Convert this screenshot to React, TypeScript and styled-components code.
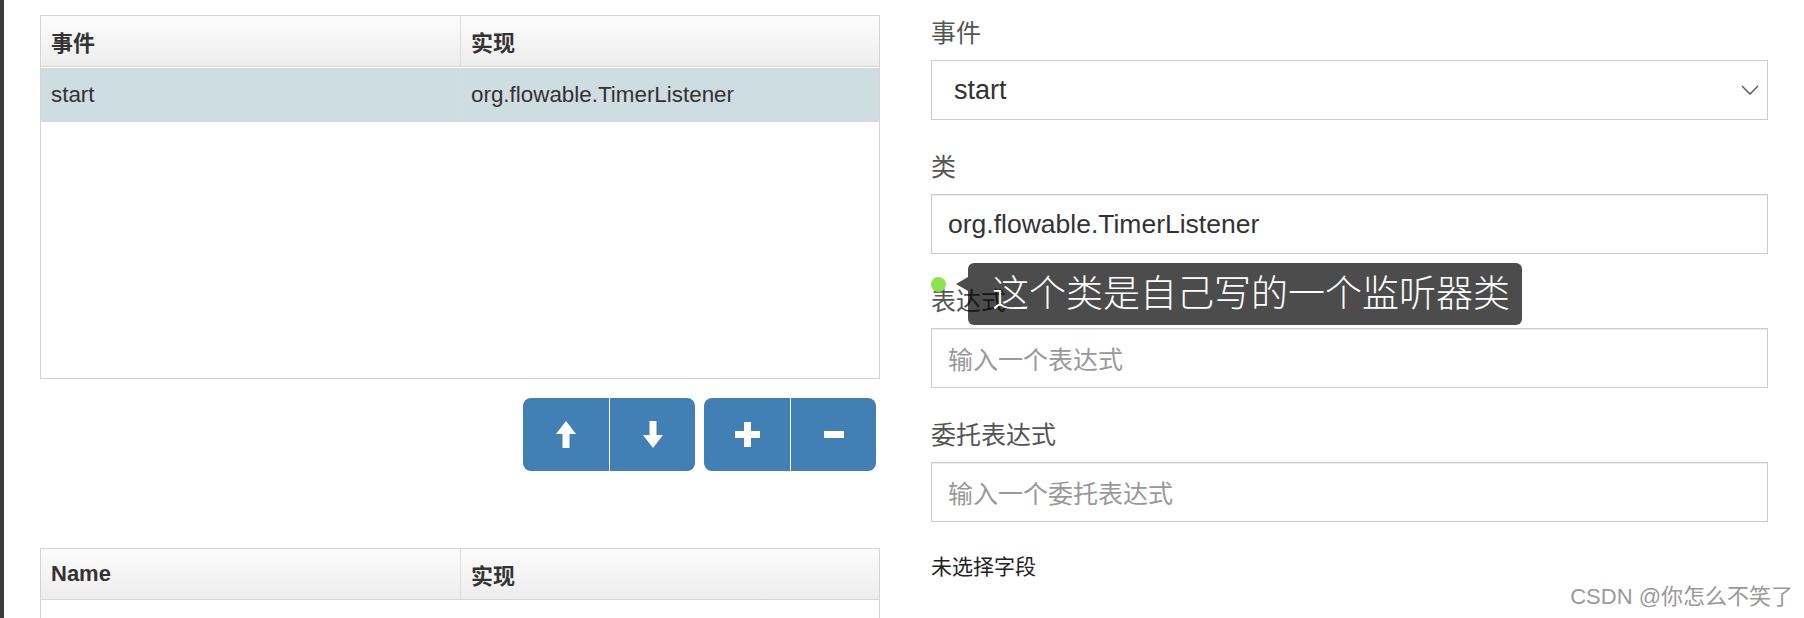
import React from "react";
import styled, { createGlobalStyle } from "styled-components";

const GlobalStyle = createGlobalStyle`
  html, body { margin: 0; padding: 0; background: #fff; }
  body {
    font-family: "Liberation Sans", "Noto Sans CJK SC", sans-serif;
    color: #333;
  }
  * { box-sizing: border-box; }
`;

const Page = styled.div`
  position: relative;
  display: flex;
  height: 618px;
  overflow: hidden;
`;

const SideBar = styled.div`
  width: 4px;
  flex-shrink: 0;
  background: #3b3b3b;
`;

const LeftPane = styled.div`
  width: 840px;
  margin-left: 36px;
  padding-top: 15px;
  display: flex;
  flex-direction: column;
  flex-shrink: 0;
`;

const Table = styled.div<{ $height: number; $mt?: number }>`
  border: 1px solid #d4d4d4;
  height: ${(p) => p.$height}px;
  margin-top: ${(p) => p.$mt ?? 0}px;
  flex-shrink: 0;
  background: #fff;
`;

const HeaderRow = styled.div`
  display: grid;
  grid-template-columns: 1fr 1fr;
  height: 51px;
  background: linear-gradient(#fcfcfc, #ededed);
  border-bottom: 1px solid #d6d6d6;
`;

const HeaderCell = styled.div`
  display: flex;
  align-items: center;
  padding-left: 10px;
  font-size: 22px;
  font-weight: bold;
  color: #333;
  & + & { border-left: 1px solid #dcdcdc; }
`;

const BodyRow = styled.div<{ $selected?: boolean }>`
  display: grid;
  grid-template-columns: 1fr 1fr;
  height: 54px;
  margin-top: 1px;
  background: ${(p) => (p.$selected ? "#cddde2" : "transparent")};
`;

const Cell = styled.div`
  display: flex;
  align-items: center;
  padding-left: 10px;
  font-size: 22.4px;
  color: #333;
  & + & { border-left: 1px solid #d6e0e3; }
`;

const ButtonBar = styled.div`
  display: flex;
  justify-content: flex-end;
  gap: 9px;
  margin-top: 19px;
  padding-right: 4px;
`;

const ButtonGroup = styled.div`
  display: flex;
  border-radius: 8px;
  overflow: hidden;
`;

const ToolButton = styled.button`
  width: 86px;
  height: 73px;
  border: none;
  padding: 0;
  margin: 0;
  background: #427fb5;
  display: flex;
  align-items: center;
  justify-content: center;
  & + & { border-left: 1px solid #fff; }
`;

const RightPane = styled.div`
  position: relative;
  width: 837px;
  margin-left: 51px;
  padding-top: 19px;
  flex-shrink: 0;
`;

const FormGroup = styled.div`
  margin-bottom: 33px;
`;

const Label = styled.div`
  font-size: 25px;
  line-height: 28px;
  color: #555;
  margin-bottom: 13px;
`;

const Field = styled.div<{ $placeholder?: boolean }>`
  height: 60px;
  border: 1px solid #ccc;
  box-shadow: inset 0 1px 1px rgba(0, 0, 0, 0.075);
  padding: 0 16px;
  display: flex;
  align-items: center;
  font-size: ${(p) => (p.$placeholder ? 25 : 26.5)}px;
  color: ${(p) => (p.$placeholder ? "#999" : "#333")};
`;

const SelectField = styled(Field)`
  padding: 0 8px 0 22px;
  justify-content: space-between;
  box-shadow: none;
  font-size: 27px;
`;

const Hint = styled.div`
  font-size: 21px;
  line-height: 24px;
  color: #222;
`;

const Tooltip = styled.div`
  position: absolute;
  left: 37px;
  top: 263px;
  width: 554px;
  height: 62px;
  background: rgba(0, 0, 0, 0.7);
  border-radius: 6px;
  color: #fff;
  font-size: 37px;
  font-weight: 300;
  line-height: 1;
  padding: 0 0 5px 24px;
  display: flex;
  align-items: center;
  white-space: nowrap;
  font-family: "Noto Sans CJK SC", sans-serif;
  &::before {
    content: "";
    position: absolute;
    left: -12px;
    top: 14px;
    border-top: 7px solid transparent;
    border-bottom: 7px solid transparent;
    border-right: 12px solid rgba(0, 0, 0, 0.7);
  }
`;

const Dot = styled.div`
  position: absolute;
  left: 0px;
  top: 277px;
  width: 15px;
  height: 15px;
  border-radius: 50%;
  background: #8be24c;
`;

const Watermark = styled.div`
  position: absolute;
  right: 11px;
  bottom: 8px;
  font-size: 22px;
  color: #9a9a9a;
  white-space: nowrap;
`;

const ArrowUp = () => (
  <svg width="20" height="27" viewBox="0 0 20 27">
    <polygon points="0,13 10,0 20,13" fill="#fff" />
    <rect x="6.5" y="12" width="7" height="15" fill="#fff" />
  </svg>
);

const ArrowDown = () => (
  <svg width="20" height="27" viewBox="0 0 20 27">
    <rect x="6.5" y="0" width="7" height="15" fill="#fff" />
    <polygon points="0,14 10,27 20,14" fill="#fff" />
  </svg>
);

const Plus = () => (
  <svg width="25" height="25" viewBox="0 0 25 25">
    <rect x="9" y="0" width="7" height="25" fill="#fff" />
    <rect x="0" y="9" width="25" height="7" fill="#fff" />
  </svg>
);

const Minus = () => (
  <svg width="20" height="7" viewBox="0 0 20 7">
    <rect x="0" y="0" width="20" height="7" fill="#fff" />
  </svg>
);

const Chevron = () => (
  <svg width="18" height="10" viewBox="0 0 18 10">
    <polyline points="1,1 9,9 17,1" fill="none" stroke="#555" strokeWidth="1.4" />
  </svg>
);

export default function App() {
  return (
    <>
      <GlobalStyle />
      <Page>
        <SideBar />
        <LeftPane>
          <Table $height={364}>
            <HeaderRow>
              <HeaderCell>事件</HeaderCell>
              <HeaderCell>实现</HeaderCell>
            </HeaderRow>
            <BodyRow $selected>
              <Cell>start</Cell>
              <Cell>org.flowable.TimerListener</Cell>
            </BodyRow>
          </Table>
          <ButtonBar>
            <ButtonGroup>
              <ToolButton aria-label="上移"><ArrowUp /></ToolButton>
              <ToolButton aria-label="下移"><ArrowDown /></ToolButton>
            </ButtonGroup>
            <ButtonGroup>
              <ToolButton aria-label="添加"><Plus /></ToolButton>
              <ToolButton aria-label="删除"><Minus /></ToolButton>
            </ButtonGroup>
          </ButtonBar>
          <Table $height={300} $mt={77}>
            <HeaderRow>
              <HeaderCell>Name</HeaderCell>
              <HeaderCell>实现</HeaderCell>
            </HeaderRow>
          </Table>
        </LeftPane>
        <RightPane>
          <FormGroup>
            <Label>事件</Label>
            <SelectField>
              <span>start</span>
              <Chevron />
            </SelectField>
          </FormGroup>
          <FormGroup>
            <Label>类</Label>
            <Field>org.flowable.TimerListener</Field>
          </FormGroup>
          <FormGroup>
            <Label>表达式</Label>
            <Field $placeholder>输入一个表达式</Field>
          </FormGroup>
          <FormGroup>
            <Label>委托表达式</Label>
            <Field $placeholder>输入一个委托表达式</Field>
          </FormGroup>
          <Hint>未选择字段</Hint>
          <Dot />
          <Tooltip>这个类是自己写的一个监听器类</Tooltip>
        </RightPane>
        <Watermark>CSDN @你怎么不笑了</Watermark>
      </Page>
    </>
  );
}
